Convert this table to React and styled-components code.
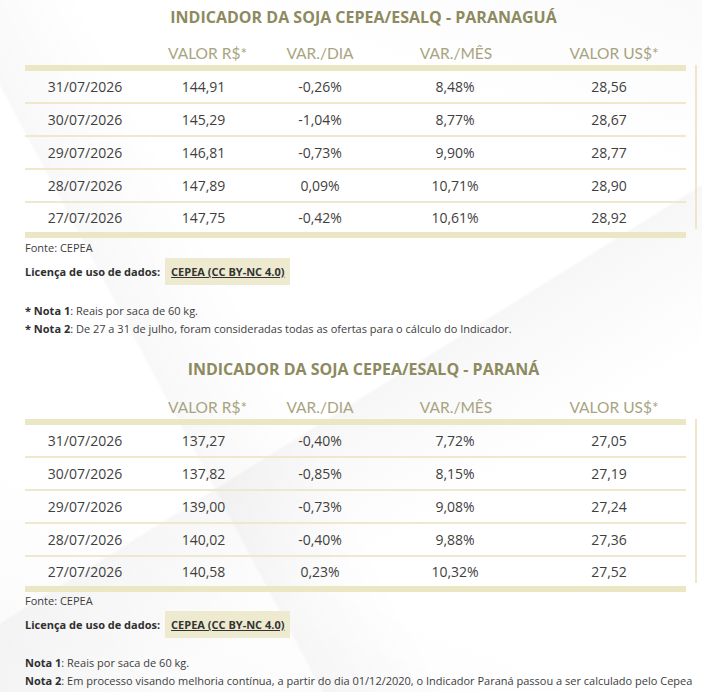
import React from "react";
import styled, { createGlobalStyle } from "styled-components";

const Global = createGlobalStyle`
  html, body { margin: 0; padding: 0; }
  body {
    width: 702px;
    min-height: 692px;
    font-family: "Open Sans", "Liberation Sans", sans-serif;
    color: #444;
    background-color: #ffffff;
    background-image:
      linear-gradient(62deg, rgba(0,0,0,0) 0%, rgba(0,0,0,0) 30%, rgba(0,0,0,0.028) 30.3%, rgba(0,0,0,0) 42%),
      linear-gradient(148deg, rgba(0,0,0,0) 55%, rgba(0,0,0,0.03) 55.3%, rgba(0,0,0,0) 70%),
      linear-gradient(20deg, rgba(0,0,0,0.025) 0%, rgba(0,0,0,0) 25%),
      linear-gradient(200deg, rgba(0,0,0,0.02) 0%, rgba(0,0,0,0) 20%);
  }
`;

const Page = styled.div`
  padding: 6px 0 0 25px;
  box-sizing: border-box;
  width: 702px;
`;

const Section = styled.section`
  display: flex;
  flex-direction: column;
  margin-bottom: ${(p) => p.$gap || 0}px;
`;

const Title = styled.h2`
  margin: 0;
  width: 661px;
  padding-left: 16px;
  box-sizing: border-box;
  text-align: center;
  font-family: "Open Sans", "Liberation Sans", sans-serif;
  font-weight: 700;
  font-size: 16px;
  line-height: 22px;
  color: #8d8a5f;
`;

const Frame = styled.div`
  display: flex;
  align-items: stretch;
`;

const TableBlock = styled.div`
  width: 661px;
  display: flex;
  flex-direction: column;
`;

const cols = "120px 117px 116px 154px 154px";

const HeadRow = styled.div`
  display: grid;
  grid-template-columns: ${cols};
  height: ${(p) => p.$h}px;
  align-items: end;
  padding-bottom: 2px;
  box-sizing: border-box;
`;

const HeadCell = styled.div`
  text-align: center;
  padding-left: ${(p) => p.$shift || 0}px;
  font-family: Lato, "Open Sans", sans-serif;
  font-size: 15.5px;
  line-height: 20px;
  color: #a8a480;
`;

const ThickRule = styled.div`
  height: 6px;
  background: #ebe6c3;
`;

const Row = styled.div`
  display: grid;
  grid-template-columns: ${cols};
  height: 31px;
  align-items: center;
  border-bottom: 2px solid #eee9cc;
  &:last-of-type {
    border-bottom: none;
    height: 29px;
  }
`;

const Cell = styled.div`
  text-align: center;
  font-size: 14px;
  line-height: 20px;
  color: #3f3f3f;
`;

const SideRule = styled.div`
  width: 2px;
  margin-left: 9px;
  margin-top: ${(p) => p.$top}px;
  margin-bottom: 9px;
  background: #ece7c6;
`;

const Small = styled.div`
  font-size: 11px;
  line-height: 18px;
  color: #3d3d3d;
  margin-top: ${(p) => p.$mt || 0}px;
`;

const LicenseRow = styled.div`
  display: flex;
  align-items: center;
  gap: 5px;
  margin-top: 1px;
  font-size: 11px;
  color: #333;
`;

const Bold = styled.b`
  font-weight: 700;
  color: #2f2f2f;
`;

const Badge = styled.a`
  display: inline-block;
  background: #eeead0;
  padding: 6px 6px;
  line-height: 15px;
  font-weight: 700;
  color: #333;
  text-decoration: underline;
  cursor: pointer;
`;

const Notes = styled.div`
  margin-top: ${(p) => p.$mt}px;
  display: flex;
  flex-direction: column;
`;

const NoteLine = styled.div`
  font-size: 11px;
  line-height: 18px;
  color: #3d3d3d;
  white-space: nowrap;
`;

const headers = ["", "VALOR R$*", "VAR./DIA", "VAR./MÊS", "VALOR US$*"];
const headShift = [0, 8, 0, 2, 10];

const tables = [
  {
    title: "INDICADOR DA SOJA CEPEA/ESALQ - PARANAGUÁ",
    headH: 37,
    fonteMt: 1,
    notesMt: 17,
    rows: [
      ["31/07/2026", "144,91", "-0,26%", "8,48%", "28,56"],
      ["30/07/2026", "145,29", "-1,04%", "8,77%", "28,67"],
      ["29/07/2026", "146,81", "-0,73%", "9,90%", "28,77"],
      ["28/07/2026", "147,89", "0,09%", "10,71%", "28,90"],
      ["27/07/2026", "147,75", "-0,42%", "10,61%", "28,92"],
    ],
    notes: [
      ["* Nota 1", ": Reais por saca de 60 kg."],
      ["* Nota 2", ": De 27 a 31 de julho, foram consideradas todas as ofertas para o cálculo do Indicador."],
    ],
  },
  {
    title: "INDICADOR DA SOJA CEPEA/ESALQ - PARANÁ",
    headH: 39,
    fonteMt: 0,
    notesMt: 16,
    rows: [
      ["31/07/2026", "137,27", "-0,40%", "7,72%", "27,05"],
      ["30/07/2026", "137,82", "-0,85%", "8,15%", "27,19"],
      ["29/07/2026", "139,00", "-0,73%", "9,08%", "27,24"],
      ["28/07/2026", "140,02", "-0,40%", "9,88%", "27,36"],
      ["27/07/2026", "140,58", "0,23%", "10,32%", "27,52"],
    ],
    notes: [
      ["Nota 1", ": Reais por saca de 60 kg."],
      ["Nota 2", ": Em processo visando melhoria contínua, a partir do dia 01/12/2020, o Indicador Paraná passou a ser calculado pelo Cepea"],
    ],
  },
];

function Indicator({ data, gap }) {
  return (
    <Section $gap={gap}>
      <Title>{data.title}</Title>
      <Frame>
        <TableBlock>
          <HeadRow $h={data.headH}>
            {headers.map((h, i) => (
              <HeadCell key={i} $shift={headShift[i]}>{h}</HeadCell>
            ))}
          </HeadRow>
          <ThickRule />
          <div>
            {data.rows.map((r) => (
              <Row key={r[0]}>
                {r.map((c, i) => (
                  <Cell key={i}>{c}</Cell>
                ))}
              </Row>
            ))}
          </div>
          <ThickRule />
        </TableBlock>
        <SideRule $top={data.headH} />
      </Frame>
      <Small $mt={data.fonteMt}>Fonte: CEPEA</Small>
      <LicenseRow>
        <Bold>Licença de uso de dados:</Bold>
        <Badge>CEPEA (CC BY-NC 4.0)</Badge>
      </LicenseRow>
      <Notes $mt={data.notesMt}>
        {data.notes.map(([b, t]) => (
          <NoteLine key={b}>
            <Bold>{b}</Bold>
            {t}
          </NoteLine>
        ))}
      </Notes>
    </Section>
  );
}

export default function App() {
  return (
    <>
      <Global />
      <Page>
        <Indicator data={tables[0]} gap={20} />
        <Indicator data={tables[1]} />
      </Page>
    </>
  );
}
